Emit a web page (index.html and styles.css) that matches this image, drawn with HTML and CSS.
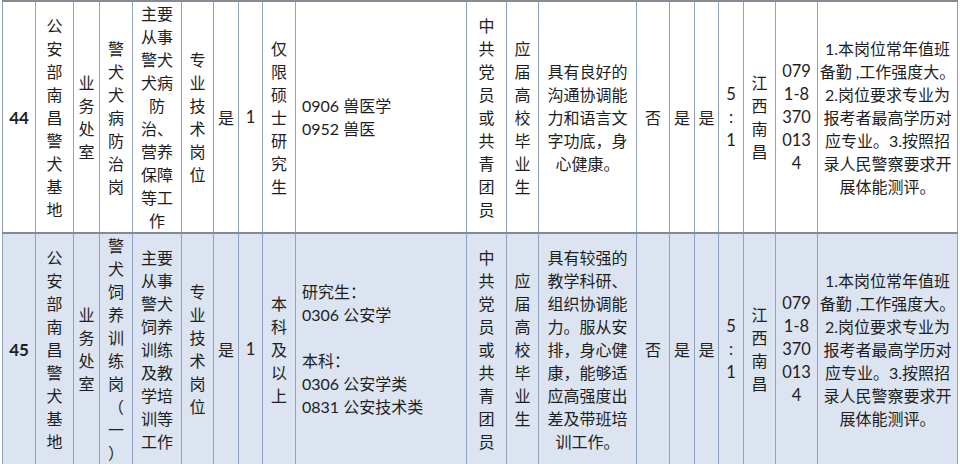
FILE: index.html
```html
<!DOCTYPE html>
<html lang="zh-CN">
<head>
<meta charset="utf-8">
<title>招录表</title>
<link rel="stylesheet" href="styles.css">
</head>
<body>
<table class="grid">
  <colgroup>
    <col class="c1"><col class="c2"><col class="c3"><col class="c4"><col class="c5">
    <col class="c6"><col class="c7"><col class="c8"><col class="c9"><col class="c10">
    <col class="c11"><col class="c12"><col class="c13"><col class="c14"><col class="c15">
    <col class="c16"><col class="c17"><col class="c18"><col class="c19"><col class="c20">
  </colgroup>
  <tbody>
    <tr class="row-a">
      <td class="num">44</td>
      <td>公<br>安<br>部<br>南<br>昌<br>警<br>犬<br>基<br>地</td>
      <td>业<br>务<br>处<br>室</td>
      <td>警<br>犬<br>犬<br>病<br>防<br>治<br>岗</td>
      <td>主要<br>从事<br>警犬<br>犬病<br>防<br>治、<br>营养<br>保障<br>等工<br>作</td>
      <td>专<br>业<br>技<br>术<br>岗<br>位</td>
      <td>是</td>
      <td class="lat">1</td>
      <td>仅<br>限<br>硕<br>士<br>研<br>究<br>生</td>
      <td class="left">0906 兽医学<br>0952 兽医</td>
      <td>中<br>共<br>党<br>员<br>或<br>共<br>青<br>团<br>员</td>
      <td>应<br>届<br>高<br>校<br>毕<br>业<br>生</td>
      <td>具有良好的<br>沟通协调能<br>力和语言文<br>字功底，身<br>心健康。</td>
      <td>否</td>
      <td>是</td>
      <td>是</td>
      <td class="lat">5<br>:<br>1</td>
      <td>江<br>西<br>南<br>昌</td>
      <td class="lat">079<br>1-8<br>370<br>013<br>4</td>
      <td>1.本岗位常年值班<br>备勤 ,工作强度大。<br>2.岗位要求专业为<br>报考者最高学历对<br>应专业。3.按照招<br>录人民警察要求开<br>展体能测评。</td>
    </tr>
    <tr class="row-b">
      <td class="num">45</td>
      <td>公<br>安<br>部<br>南<br>昌<br>警<br>犬<br>基<br>地</td>
      <td>业<br>务<br>处<br>室</td>
      <td>警<br>犬<br>饲<br>养<br>训<br>练<br>岗<br>（<br>一<br>）</td>
      <td>主要<br>从事<br>警犬<br>饲养<br>训练<br>及教<br>学培<br>训等<br>工作</td>
      <td>专<br>业<br>技<br>术<br>岗<br>位</td>
      <td>是</td>
      <td class="lat">1</td>
      <td>本<br>科<br>及<br>以<br>上</td>
      <td class="left">研究生：<br>0306 公安学<br><br>本科：<br>0306 公安学类<br>0831 公安技术类</td>
      <td>中<br>共<br>党<br>员<br>或<br>共<br>青<br>团<br>员</td>
      <td>应<br>届<br>高<br>校<br>毕<br>业<br>生</td>
      <td>具有较强的<br>教学科研、<br>组织协调能<br>力。服从安<br>排，身心健<br>康，能够适<br>应高强度出<br>差及带班培<br>训工作。</td>
      <td>否</td>
      <td>是</td>
      <td>是</td>
      <td class="lat">5<br>:<br>1</td>
      <td>江<br>西<br>南<br>昌</td>
      <td class="lat">079<br>1-8<br>370<br>013<br>4</td>
      <td>1.本岗位常年值班<br>备勤 ,工作强度大。<br>2.岗位要求专业为<br>报考者最高学历对<br>应专业。3.按照招<br>录人民警察要求开<br>展体能测评。</td>
    </tr>
  </tbody>
</table>
</body>
</html>
```
FILE: styles.css
```css
html, body {
  margin: 0;
  padding: 0;
  background: #ffffff;
}

body {
  font-family: Lato, "Noto Sans CJK SC", sans-serif;
  color: #1e1e1e;
}

.grid {
  border-collapse: collapse;
  table-layout: fixed;
  width: 955px;
  margin: 0 0 0 2px;
}

.grid td {
  border-left: 1px solid #8ea2c0;
  border-right: 1px solid #8ea2c0;
  border-top: 2px solid #858b94;
  border-bottom: 2px solid #858b94;
  padding: 0;
  height: 228px;
  font-size: 16px;
  line-height: 23px;
  text-align: center;
  vertical-align: middle;
  white-space: nowrap;
  overflow: hidden;
}

.row-a td { background: #ffffff; }
.row-b td { background: #dbe4f0; }

.grid td.num {
  font-weight: 700;
  font-size: 17px;
}

.grid td.lat {
  font-size: 16.5px;
}

.grid td.left {
  text-align: left;
  padding-left: 6px;
}

.c1 { width: 33px; }
.c2 { width: 38px; }
.c3 { width: 26px; }
.c4 { width: 33px; }
.c5 { width: 49px; }
.c6 { width: 32px; }
.c7 { width: 25px; }
.c8 { width: 24px; }
.c9 { width: 33px; }
.c10 { width: 171px; }
.c11 { width: 40px; }
.c12 { width: 32px; }
.c13 { width: 98px; }
.c14 { width: 33px; }
.c15 { width: 25px; }
.c16 { width: 24px; }
.c17 { width: 25px; }
.c18 { width: 32px; }
.c19 { width: 42px; }
.c20 { width: 140px; }
```
